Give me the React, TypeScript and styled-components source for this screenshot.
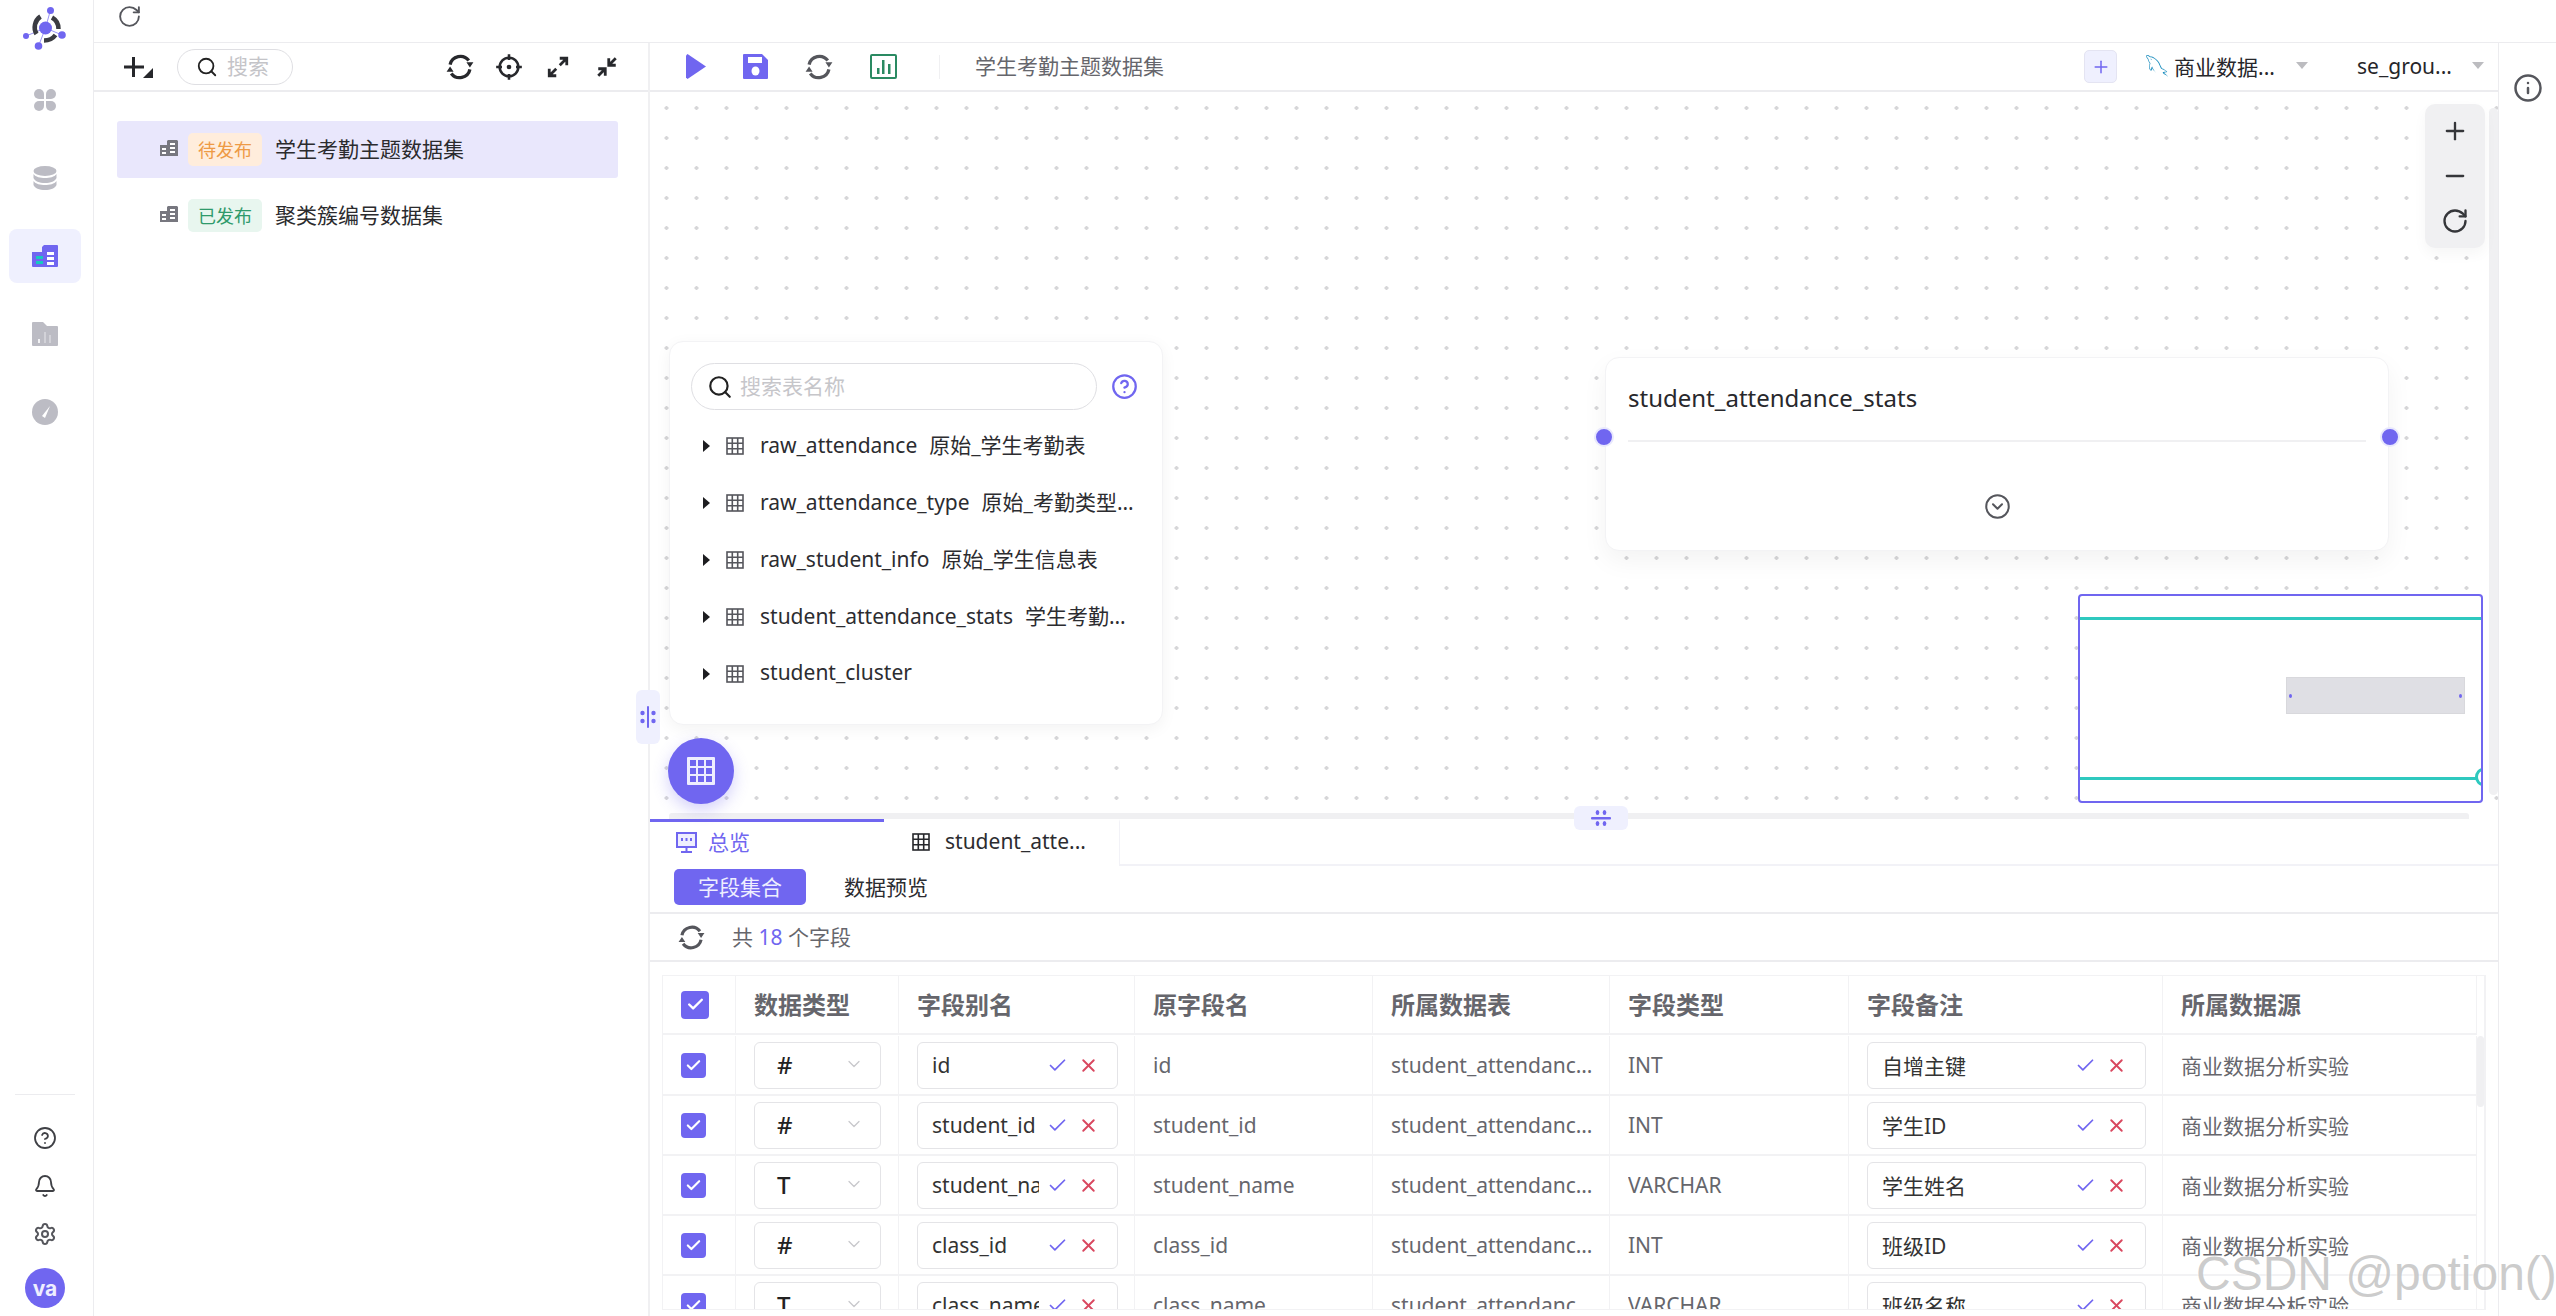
import React from 'react'
import styled, { createGlobalStyle } from 'styled-components'
import {
  Bell,
  Check,
  ChevronDown,
  CircleChevronDown,
  CircleHelp,
  Info,
  Minus,
  Plus,
  RotateCw,
  Search,
  Settings,
  X,
} from 'lucide-react'
import { GrMysql } from 'react-icons/gr'

const PURPLE = '#7066f0'
const LINE = '#ececef'

const GlobalStyle = createGlobalStyle`
  html, body, #root {
    margin: 0;
    height: 100%;
    background: #fff;
  }
  body {
    font-family: "Noto Sans", "Noto Sans CJK SC", sans-serif;
    font-size: 21px;
    color: #333;
    overflow: hidden;
  }
  * {
    box-sizing: border-box;
  }
`

const Page = styled.div`
  position: relative;
  display: flex;
  width: 2556px;
  height: 1316px;
  overflow: hidden;
`

/* left rail */
const Rail = styled.aside`
  width: 94px;
  flex: none;
  display: flex;
  flex-direction: column;
  align-items: center;
  padding: 7px 3px 8px 0;
  border-right: 1px solid ${LINE};
`

const LogoWrap = styled.div`
  height: 43px;
  margin-bottom: 23px;
`

const RailNav = styled.nav`
  display: flex;
  flex-direction: column;
  gap: 24px;
`

const RailItem = styled.div<{ $active?: boolean }>`
  width: 72px;
  height: 54px;
  display: flex;
  align-items: center;
  justify-content: center;
  border-radius: 8px;
  background: ${(p) => (p.$active ? '#eff0fe' : 'transparent')};
`

const RailFoot = styled.div`
  margin-top: auto;
  width: 60px;
  display: flex;
  flex-direction: column;
  align-items: center;
  gap: 24px;
  padding-top: 31px;
  border-top: 1px solid ${LINE};
  color: #3f4045;
`

const Avatar = styled.div`
  width: 40px;
  height: 40px;
  margin-top: -2px;
  border-radius: 50%;
  background: ${PURPLE};
  color: #eef;
  font: 700 21px 'Inter', sans-serif;
  display: flex;
  align-items: center;
  justify-content: center;
`

/* main frame */
const Main = styled.div`
  flex: 1;
  min-width: 0;
  display: flex;
  flex-direction: column;
`

const TopStrip = styled.div`
  height: 43px;
  flex: none;
  display: flex;
  align-items: flex-start;
  padding: 4px 0 0 23px;
  border-bottom: 1px solid ${LINE};
  color: #55565c;
`

const Workspace = styled.div`
  flex: 1;
  min-height: 0;
  display: flex;
`

/* dataset list */
const ListPanel = styled.section`
  width: 556px;
  flex: none;
  border-right: 2px solid #f0f0f2;
`

const ListToolbar = styled.div`
  height: 49px;
  display: flex;
  align-items: center;
  gap: 24px;
  padding: 0 27px 0 29px;
  border-bottom: 2px solid ${LINE};
`

const SearchPill = styled.div`
  width: 116px;
  height: 36px;
  display: flex;
  align-items: center;
  gap: 9px;
  padding: 0 0 3px 18px;
  border: 1px solid #dfdfe3;
  border-radius: 18px;
  color: #c4c4c8;
  svg {
    color: #222;
    flex: none;
    margin-top: 3px;
  }
`

const ToolGroup = styled.div`
  margin-left: auto;
  display: flex;
  align-items: center;
  gap: 21px;
  color: #27282c;
`

const DatasetList = styled.ul`
  list-style: none;
  margin: 0;
  padding: 29px 30px 0 23px;
  display: flex;
  flex-direction: column;
  gap: 9px;
`

const DatasetRow = styled.li<{ $active?: boolean }>`
  height: 57px;
  display: flex;
  align-items: center;
  padding: 0 0 3px 43px;
  border-radius: 3px;
  background: ${(p) => (p.$active ? '#e9e7fc' : 'transparent')};
  color: #2b2b2e;
  white-space: nowrap;
`

const StatusTag = styled.span<{ $tone: 'wait' | 'done' }>`
  width: 74px;
  height: 33px;
  margin: 3px 13px 0 10px;
  padding-bottom: 2px;
  display: flex;
  align-items: center;
  justify-content: center;
  border-radius: 5px;
  font-size: 18px;
  background: ${(p) => (p.$tone === 'wait' ? '#ffeddc' : '#e8f6ef')};
  color: ${(p) => (p.$tone === 'wait' ? '#ee9a45' : '#2f9a6b')};
`

/* editor */
const Editor = styled.section`
  flex: 1;
  min-width: 0;
  display: flex;
  flex-direction: column;
`

const EditorToolbar = styled.div`
  height: 49px;
  flex: none;
  display: flex;
  align-items: center;
  padding: 0 14px 0 36px;
  border-bottom: 2px solid ${LINE};
`

const ActionGroup = styled.div`
  display: flex;
  align-items: center;
  gap: 37px;
`

const ToolDivider = styled.div`
  width: 1px;
  height: 24px;
  margin: 0 35px 0 42px;
  background: #f0f0f2;
`

const EditorTitle = styled.span`
  color: #66666c;
  padding-bottom: 3px;
`

const AddButton = styled.div`
  width: 33px;
  height: 33px;
  margin-left: auto;
  margin-right: 29px;
  display: flex;
  align-items: center;
  justify-content: center;
  border: 1px solid #e4e4f2;
  border-radius: 5px;
  background: #eff0fe;
  color: ${PURPLE};
`

const PickBox = styled.div<{ $width: number; $gap?: number }>`
  width: ${(p) => p.$width}px;
  margin-right: ${(p) => p.$gap ?? 0}px;
  display: flex;
  align-items: center;
  gap: 6px;
  color: #26262a;
  white-space: nowrap;
  padding-bottom: 2px;
`

const Caret = styled.i`
  margin-left: auto;
  width: 0;
  height: 0;
  border-left: 6px solid transparent;
  border-right: 6px solid transparent;
  border-top: 7px solid #bcbcc0;
`

const Canvas = styled.div`
  position: relative;
  flex: 1;
  min-height: 0;
  background-color: #fff;
  background-image: radial-gradient(circle, #d6d6d8 1.7px, transparent 1.8px);
  background-size: 30px 30px;
  background-position: 1.5px 1px;
`

const ZoomDock = styled.div`
  position: absolute;
  left: 1775px;
  top: 12px;
  width: 60px;
  height: 144px;
  display: flex;
  flex-direction: column;
  align-items: center;
  justify-content: space-around;
  padding: 4px 0;
  border-radius: 10px;
  background: #f0f0f2;
  color: #35363a;
  box-shadow: 0 6px 14px rgba(0, 0, 0, 0.04);
  z-index: 2;
`

const VBar = styled.div`
  position: absolute;
  right: 0;
  top: 16px;
  width: 9px;
  height: 687px;
  border-radius: 5px;
  background: #f0f0f2;
`

const HBar = styled.div`
  position: absolute;
  left: 19px;
  right: 29px;
  bottom: 0;
  height: 6px;
  border-radius: 3px 3px 0 0;
  background: #f0f0f2;
`

const TablePanel = styled.div`
  position: absolute;
  left: 19px;
  top: 249px;
  width: 494px;
  height: 384px;
  padding: 21px 0 0 21px;
  border: 1px solid #f3f3f5;
  border-radius: 14px;
  background: #fff;
  box-shadow: 0 4px 16px rgba(0, 0, 0, 0.05);
  z-index: 2;
`

const TableSearchRow = styled.div`
  display: flex;
  align-items: center;
  gap: 14px;
  margin-bottom: 7px;
  color: ${PURPLE};
`

const TableSearch = styled.div`
  width: 406px;
  height: 47px;
  display: flex;
  align-items: center;
  gap: 7px;
  padding: 0 0 3px 15px;
  border: 1px solid #dfdfe3;
  border-radius: 24px;
  color: #c6c6ca;
  svg {
    color: #222;
    flex: none;
    margin-top: 3px;
  }
`

const TreeRow = styled.div`
  height: 57px;
  display: flex;
  align-items: center;
  padding-left: 12px;
  color: #2c2c30;
  white-space: nowrap;
`

const TreeCaret = styled.i`
  width: 0;
  height: 0;
  flex: none;
  margin-right: 16px;
  border-top: 6.5px solid transparent;
  border-bottom: 6.5px solid transparent;
  border-left: 7px solid #1d1d20;
`

const TreeText = styled.span`
  width: 375px;
  margin-left: 16px;
  padding-bottom: 3px;
  overflow: hidden;
  text-overflow: ellipsis;
  b {
    font-weight: 400;
    margin-left: 12px;
  }
`

const GripSide = styled.div`
  position: absolute;
  left: -14px;
  top: 598px;
  width: 24px;
  height: 54px;
  display: flex;
  align-items: center;
  justify-content: center;
  border-radius: 6px;
  background: #eff0fe;
  z-index: 3;
`

const GripBottom = styled.div`
  position: absolute;
  left: 924px;
  top: 714px;
  width: 54px;
  height: 24px;
  display: flex;
  align-items: center;
  justify-content: center;
  border-radius: 6px;
  background: #eff0fe;
  z-index: 3;
`

const Fab = styled.div`
  position: absolute;
  left: 18px;
  top: 646px;
  width: 66px;
  height: 66px;
  display: flex;
  align-items: center;
  justify-content: center;
  border-radius: 50%;
  background: ${PURPLE};
  box-shadow: 0 6px 16px rgba(112, 102, 240, 0.3);
  z-index: 3;
`

const NodeCard = styled.div`
  position: absolute;
  left: 955px;
  top: 265px;
  width: 784px;
  height: 194px;
  display: flex;
  flex-direction: column;
  padding: 0 22px 0 22px;
  border: 1px solid #f3f3f5;
  border-radius: 14px;
  background: #fff;
  box-shadow: 0 10px 26px rgba(0, 0, 0, 0.05);
`

const NodeTitle = styled.div`
  height: 84px;
  display: flex;
  align-items: center;
  padding-bottom: 4px;
  font-size: 24px;
  color: #28282c;
  border-bottom: 2px solid #f0f0f2;
`

const NodeFoot = styled.div`
  flex: 1;
  display: flex;
  align-items: center;
  justify-content: center;
  padding-top: 20px;
  color: #55565c;
`

const Port = styled.i<{ $side: 'left' | 'right' }>`
  position: absolute;
  top: 69px;
  ${(p) => p.$side}: -12px;
  width: 20px;
  height: 20px;
  border-radius: 50%;
  background: ${PURPLE};
  border: 2px solid #e8e8fd;
`

const MiniMap = styled.div`
  position: absolute;
  left: 1428px;
  top: 502px;
  width: 405px;
  height: 209px;
  overflow: hidden;
  border: 2px solid ${PURPLE};
  border-radius: 4px;
  background: #fff;
`

const MiniLine = styled.i<{ $top: number }>`
  position: absolute;
  left: 0;
  right: 0;
  top: ${(p) => p.$top}px;
  height: 3px;
  background: #2ec9bf;
`

const MiniRing = styled.i`
  position: absolute;
  right: -10px;
  top: 172px;
  width: 16px;
  height: 18px;
  border: 3px solid #2ec9bf;
  border-radius: 50%;
  background: #fff;
`

const MiniNode = styled.i`
  position: absolute;
  left: 206px;
  top: 81px;
  width: 179px;
  height: 37px;
  background: #dfdfe4;
  border: 1px solid #d8d8dc;
  &::before,
  &::after {
    content: '';
    position: absolute;
    top: 16px;
    width: 3px;
    height: 4px;
    border-radius: 50%;
    background: ${PURPLE};
  }
  &::before {
    left: 2px;
  }
  &::after {
    right: 2px;
  }
`

/* detail area */
const Detail = styled.div`
  height: 497px;
  flex: none;
  display: flex;
  flex-direction: column;
`

const TabRow = styled.div`
  height: 47px;
  flex: none;
  display: flex;
  border-bottom: 2px solid #f2f2f7;
`

const TabItem = styled.div<{ $active?: boolean }>`
  height: 47px;
  width: ${(p) => (p.$active ? 234 : 236)}px;
  display: flex;
  align-items: center;
  gap: ${(p) => (p.$active ? 11 : 15)}px;
  padding: 0 0 6px ${(p) => (p.$active ? 26 : 28)}px;
  border-top: 3px solid ${(p) => (p.$active ? PURPLE : 'transparent')};
  border-right: ${(p) => (p.$active ? 'none' : '1px solid #f2f2f7')};
  background: #fff;
  color: ${(p) => (p.$active ? PURPLE : '#2c2c30')};
  svg {
    margin-top: 2px;
    flex: none;
  }
`

const SubTabs = styled.div`
  height: 48px;
  flex: none;
  display: flex;
  align-items: center;
  gap: 38px;
  padding: 0 0 5px 24px;
  border-bottom: 2px solid #ececef;
`

const SubTab = styled.div<{ $active?: boolean }>`
  width: ${(p) => (p.$active ? '132px' : 'auto')};
  height: 36px;
  display: flex;
  align-items: center;
  justify-content: center;
  padding-bottom: 2px;
  border-radius: 5px;
  background: ${(p) => (p.$active ? PURPLE : 'transparent')};
  color: ${(p) => (p.$active ? '#eef' : '#2c2c30')};
`

const CountRow = styled.div`
  height: 48px;
  flex: none;
  display: flex;
  align-items: center;
  gap: 27px;
  padding-left: 28px;
  border-bottom: 2px solid #ececef;
  color: #66666c;
  span {
    padding-bottom: 2px;
  }
  em {
    font-style: normal;
    color: ${PURPLE};
  }
`

const TableShell = styled.div`
  margin: 13px 12px 0;
  height: 335px;
  display: flex;
  overflow: hidden;
  border: 1px solid #f2f2f4;
  border-right: 2px solid #f2f2f4;
`

const FieldGrid = styled.div`
  width: 1814px;
  flex: none;
  display: grid;
  grid-template-columns: 73px 163px 236px 238px 237px 239px 314px 314px;
  grid-auto-rows: 60px;
  align-content: start;
`

const HeadCell = styled.div`
  height: 59px;
  display: flex;
  align-items: center;
  padding-left: 18px;
  padding-bottom: 2px;
  border-right: 1px solid #f2f2f4;
  border-bottom: 2px solid #f2f2f4;
  font-size: 24px;
  font-weight: 700;
  color: #66666c;
`

const BodyCell = styled.div<{ $tight?: boolean }>`
  min-width: 0;
  display: flex;
  align-items: center;
  padding: 0 ${(p) => (p.$tight ? 6 : 16)}px 0 18px;
  border-right: 1px solid #f2f2f4;
  border-bottom: 2px solid #f2f2f4;
  color: #66666c;
  span {
    padding-bottom: 1px;
    overflow: hidden;
    white-space: nowrap;
    text-overflow: ellipsis;
  }
`

const CheckBox = styled.div<{ $size: number }>`
  width: ${(p) => p.$size}px;
  height: ${(p) => p.$size}px;
  margin-top: ${(p) => (p.$size > 25 ? 2 : 0)}px;
  display: flex;
  align-items: center;
  justify-content: center;
  border-radius: 4px;
  background: ${PURPLE};
  color: #fff;
`

const TypeSelect = styled.div`
  width: 127px;
  height: 47px;
  flex: none;
  display: flex;
  align-items: center;
  padding: 0 16px 2px 22px;
  border: 1px solid #e4e4e7;
  border-radius: 6px;
  color: #222;
  font-size: 24px;
  font-weight: 500;
  svg {
    margin-left: auto;
    color: #c8c8cc;
  }
`

const EditBox = styled.div`
  width: 100%;
  height: 47px;
  display: flex;
  align-items: center;
  padding: 0 18px 0 14px;
  border: 1px solid #e4e4e7;
  border-radius: 6px;
  color: #333;
  span {
    flex: 1;
    min-width: 0;
    text-overflow: clip;
  }
`

const EditActions = styled.div`
  display: flex;
  align-items: center;
  gap: 10px;
  margin-left: 8px;
  flex: none;
`

const ScrollTrack = styled.div`
  flex: 1;
  padding-top: 60px;
`

const ScrollThumb = styled.div`
  height: 71px;
  border-radius: 4px;
  background: #f0f0f2;
`

const InfoColumn = styled.div`
  width: 58px;
  flex: none;
  display: flex;
  justify-content: center;
  padding-top: 30px;
  border-left: 1px solid ${LINE};
  color: #55565c;
`

const Watermark = styled.div`
  position: absolute;
  left: 2196px;
  top: 1246px;
  font: 48px 'Liberation Sans', sans-serif;
  white-space: nowrap;
  color: rgba(170, 170, 170, 0.6);
  text-shadow: 0 0 3px #fff;
  pointer-events: none;
`

/* drawings */
const Logo = () => (
  <svg width="44" height="43" viewBox="0 0 44 43">
    <path d="M22.500 21 27.500 3M22.500 21 39 28M22.500 21 15.500 39M22.500 21 3 29" stroke="#9a94f6" strokeWidth="1" fill="none" />
    <g stroke="#3b3c42" strokeWidth="4.500" fill="none">
      <path d="M17.500 9.500A13 13 0 0 0 13.500 27" />
      <path d="M29 10.500A13 13 0 0 1 35.500 22" />
      <path d="M21 33.500C26 33.500 30 31.500 32.500 28" />
    </g>
    <g fill={PURPLE}>
      <circle cx="22.500" cy="21" r="6.500" />
      <circle cx="27.500" cy="3.500" r="3.500" />
      <circle cx="39" cy="28" r="3.800" />
      <circle cx="15.500" cy="39" r="3.800" />
      <circle cx="3" cy="29" r="3" />
    </g>
  </svg>
)

const Clover = () => (
  <svg width="24" height="24" viewBox="0 0 24 24" fill="#bcbcc4">
    <path d="M11 11H6a5 5 0 1 1 5-5z" />
    <path d="M13 11h5a5 5 0 1 0-5-5z" />
    <path d="M11 13H6a5 5 0 1 0 5 5z" />
    <path d="M13 13h5a5 5 0 1 1-5 5z" />
  </svg>
)

const Database = () => (
  <svg width="24" height="24" viewBox="0 0 24 24" fill="#bcbcc4">
    <ellipse cx="12" cy="5" rx="11.500" ry="5" />
    <path d="M.5 8c2 3 7 4 11.500 4s9.500-1 11.500-4v4c-1 3-6 5-11.500 5S1.500 15 .5 12z" />
    <path d="M.5 15c2 3 7 4 11.500 4s9.500-1 11.500-4v4c-1 3-6 5-11.500 5S1.500 22 .5 19z" />
  </svg>
)

const BuildingActive = () => (
  <svg width="26" height="22" viewBox="0 0 26 22">
    <path d="M0 7h10V2l2-2h13a1 1 0 0 1 1 1v20a1 1 0 0 1-1 1H1a1 1 0 0 1-1-1z" fill={PURPLE} />
    <g fill="#17c9c0">
      <rect x="4" y="11" width="7" height="3" />
      <rect x="4" y="16" width="7" height="3" />
    </g>
    <g fill="#fff">
      <rect x="15" y="7" width="7" height="3" />
      <rect x="15" y="12" width="7" height="3" />
      <rect x="15" y="17" width="7" height="3" />
    </g>
  </svg>
)

const FolderChart = () => (
  <svg width="26" height="24" viewBox="0 0 26 24">
    <path d="M0 1a1 1 0 0 1 1-1h10l4 4h10a1 1 0 0 1 1 1v18a1 1 0 0 1-1 1H1a1 1 0 0 1-1-1z" fill="#bcbcc4" />
    <g fill="#d2d2d8">
      <rect x="6" y="17" width="2" height="4" fill="#f2f2f4" />
      <rect x="12" y="10" width="2" height="11" />
      <rect x="17" y="13" width="2" height="8" />
    </g>
  </svg>
)

const Gauge = () => (
  <svg width="26" height="26" viewBox="0 0 26 26">
    <circle cx="13" cy="13" r="13" fill="#bcbcc4" />
    <path d="M10 17 18 7l-5 12z" fill="#fff" />
  </svg>
)

const PlusCorner = () => (
  <svg width="30" height="22" viewBox="0 0 30 22">
    <path d="M10.500 1v20M1 11h20" stroke="#26272b" strokeWidth="3" />
    <path d="M30 12v10H20z" fill="#26272b" />
  </svg>
)

const Sync = ({ size = 28, color = '#55565c' }: { size?: number; color?: string }) => (
  <svg width={size} height={size} viewBox="0 0 24 24" fill="none">
    <path d="M3.500 10A9 9 0 0 1 19.500 6.500M20.500 14A9 9 0 0 1 4.500 17.500" stroke={color} strokeWidth="2.800" />
    <path d="M17.500 8h6l-3 4.500zM.5 16h6l-3-4.500z" fill={color} />
  </svg>
)

const Target = () => (
  <svg width="28" height="28" viewBox="0 0 24 24" fill="none" stroke="currentColor" strokeWidth="2.200">
    <circle cx="12" cy="12" r="8" />
    <path d="M12 1v5M12 18v5M1 12h5M18 12h5" />
    <circle cx="12" cy="12" r="2" fill="currentColor" stroke="none" />
  </svg>
)

const Expand = () => (
  <svg width="28" height="28" viewBox="-4 -4 32 32" fill="none" stroke="currentColor" strokeWidth="3.200">
    <path d="M14 10l8-8M14 2h8v8M10 14l-8 8M2 14v8h8" />
  </svg>
)

const Collapse = () => (
  <svg width="28" height="28" viewBox="-4 -4 32 32" fill="none" stroke="currentColor" strokeWidth="3.200">
    <path d="M22 2l-8 8M14 2v8h8M2 22l8-8M2 14h8v8" />
  </svg>
)

const SmallBuilding = () => (
  <svg width="18" height="16" viewBox="0 0 18 16">
    <path d="M0 5h7V1l1-1h9l1 1v15H0z" fill="#77777f" />
    <g fill="#fff">
      <rect x="2" y="8" width="4" height="2" />
      <rect x="2" y="12" width="4" height="2" />
      <rect x="10" y="3" width="5" height="2" />
      <rect x="10" y="7" width="5" height="2" />
      <rect x="10" y="11" width="5" height="2" />
    </g>
  </svg>
)

const Play = () => (
  <svg width="20" height="25" viewBox="0 0 20 25">
    <path d="M0 1.500 1.500 0 20 12.500 1.500 25 0 23.500z" fill={PURPLE} />
  </svg>
)

const Save = () => (
  <svg width="25" height="25" viewBox="0 0 25 25">
    <path d="M1 0h18l6 6v18a1 1 0 0 1-1 1H1a1 1 0 0 1-1-1V1a1 1 0 0 1 1-1z" fill={PURPLE} />
    <rect x="5" y="3" width="14" height="6" fill="#fff" />
    <ellipse cx="12.500" cy="17" rx="4" ry="4.500" fill="#fff" />
  </svg>
)

const ChartBox = () => (
  <svg width="27" height="25" viewBox="0 0 27 25">
    <rect x="1" y="1" width="25" height="23" rx="1" fill="#fff" stroke="#2a8a62" strokeWidth="2" />
    <path d="M7 14h2.500v6H7zM12 6h2.500v14H12zM18 10h2.500v10H18z" fill="#2a8a62" />
  </svg>
)

const GridIcon = ({ size = 18, color = '#55565c' }: { size?: number; color?: string }) => (
  <svg width={size} height={size} viewBox="0 0 18 18" fill="none" stroke={color} strokeWidth="1.600">
    <rect x="1" y="1" width="16" height="16" />
    <path d="M6.300 1v16M11.700 1v16M1 6.300h16M1 11.700h16" />
  </svg>
)

const FabGrid = () => (
  <svg width="28" height="28" viewBox="0 0 28 28">
    <rect width="28" height="28" rx="1" fill="#eeeefe" />
    <g fill={PURPLE}>
      {[3, 11, 19].map((y) =>
        [3, 11, 19].map((x) => <rect key={`${x}-${y}`} x={x} y={y} width="6" height="6" />)
      )}
    </g>
  </svg>
)

const GripV = () => (
  <svg width="16" height="22" viewBox="0 0 16 22" fill={PURPLE}>
    <rect x="7" y="0" width="2" height="22" rx="1" />
    <circle cx="2.500" cy="7" r="2.200" />
    <circle cx="13.500" cy="7" r="2.200" />
    <circle cx="2.500" cy="15" r="2.200" />
    <circle cx="13.500" cy="15" r="2.200" />
  </svg>
)

const GripH = () => (
  <svg width="20" height="16" viewBox="0 0 20 16" fill={PURPLE}>
    <rect x="0" y="7" width="20" height="2.400" rx="1" />
    <ellipse cx="6.500" cy="2.500" rx="1.800" ry="2.500" />
    <ellipse cx="13.500" cy="2.500" rx="1.800" ry="2.500" />
    <ellipse cx="6.500" cy="13.500" rx="1.800" ry="2.500" />
    <ellipse cx="13.500" cy="13.500" rx="1.800" ry="2.500" />
  </svg>
)

const Monitor = () => (
  <svg width="21" height="21" viewBox="0 0 21 21" fill="none" stroke={PURPLE} strokeWidth="2">
    <rect x="1" y="1" width="19" height="14" fill="#eeeefe" />
    <path d="M10.500 15v4M5 20h11M6 6v3M10.500 6v3M15 6v3" />
  </svg>
)

const fields = [
  { type: '#', alias: 'id', source: 'id', kind: 'INT', note: '自增主键' },
  { type: '#', alias: 'student_id', source: 'student_id', kind: 'INT', note: '学生ID' },
  { type: 'T', alias: 'student_name', source: 'student_name', kind: 'VARCHAR', note: '学生姓名' },
  { type: '#', alias: 'class_id', source: 'class_id', kind: 'INT', note: '班级ID' },
  { type: 'T', alias: 'class_name', source: 'class_name', kind: 'VARCHAR', note: '班级名称' },
]

const tables = [
  ['raw_attendance', '原始_学生考勤表'],
  ['raw_attendance_type', '原始_考勤类型维度表'],
  ['raw_student_info', '原始_学生信息表'],
  ['student_attendance_stats', '学生考勤主题统计表'],
  ['student_cluster', ''],
]

const headers = ['数据类型', '字段别名', '原字段名', '所属数据表', '字段类型', '字段备注', '所属数据源']

const EditCell = ({ value }: { value: string }) => (
  <BodyCell>
    <EditBox>
      <span>{value}</span>
      <EditActions>
        <Check size={21} color={PURPLE} strokeWidth={2} />
        <X size={21} color="#d9475f" strokeWidth={2.200} />
      </EditActions>
    </EditBox>
  </BodyCell>
)

export default function App() {
  return (
    <Page>
      <GlobalStyle />
      <Rail>
        <LogoWrap>
          <Logo />
        </LogoWrap>
        <RailNav>
          <RailItem>
            <Clover />
          </RailItem>
          <RailItem>
            <Database />
          </RailItem>
          <RailItem $active>
            <BuildingActive />
          </RailItem>
          <RailItem>
            <FolderChart />
          </RailItem>
          <RailItem>
            <Gauge />
          </RailItem>
        </RailNav>
        <RailFoot>
          <CircleHelp size={24} strokeWidth={1.800} />
          <Bell size={24} strokeWidth={1.800} />
          <Settings size={24} strokeWidth={2} color="#55565c" />
          <Avatar>va</Avatar>
        </RailFoot>
      </Rail>

      <Main>
        <TopStrip>
          <RotateCw size={25} strokeWidth={1.800} />
        </TopStrip>
        <Workspace>
          <ListPanel>
            <ListToolbar>
              <PlusCorner />
              <SearchPill>
                <Search size={22} strokeWidth={2} />
                搜索
              </SearchPill>
              <ToolGroup>
                <Sync color="#27282c" />
                <Target />
                <Expand />
                <Collapse />
              </ToolGroup>
            </ListToolbar>
            <DatasetList>
              <DatasetRow $active>
                <SmallBuilding />
                <StatusTag $tone="wait">待发布</StatusTag>
                学生考勤主题数据集
              </DatasetRow>
              <DatasetRow>
                <SmallBuilding />
                <StatusTag $tone="done">已发布</StatusTag>
                聚类簇编号数据集
              </DatasetRow>
            </DatasetList>
          </ListPanel>

          <Editor>
            <EditorToolbar>
              <ActionGroup>
                <Play />
                <Save />
                <Sync />
                <ChartBox />
              </ActionGroup>
              <ToolDivider />
              <EditorTitle>学生考勤主题数据集</EditorTitle>
              <AddButton>
                <Plus size={20} strokeWidth={1.800} />
              </AddButton>
              <PickBox $width={162} $gap={49}>
                <GrMysql size={22} color="#1f8fbf" />
                商业数据...
                <Caret />
              </PickBox>
              <PickBox $width={127}>
                se_grou...
                <Caret />
              </PickBox>
            </EditorToolbar>

            <Canvas>
              <ZoomDock>
                <Plus size={28} strokeWidth={2} />
                <Minus size={28} strokeWidth={2} />
                <RotateCw size={28} strokeWidth={2} />
              </ZoomDock>
              <VBar />
              <HBar />

              <TablePanel>
                <TableSearchRow>
                  <TableSearch>
                    <Search size={26} strokeWidth={2} />
                    搜索表名称
                  </TableSearch>
                  <CircleHelp size={27} strokeWidth={2} />
                </TableSearchRow>
                {tables.map(([name, label]) => (
                  <TreeRow key={name}>
                    <TreeCaret />
                    <GridIcon />
                    <TreeText>
                      {name}
                      {label && <b>{label}</b>}
                    </TreeText>
                  </TreeRow>
                ))}
              </TablePanel>
              <GripSide>
                <GripV />
              </GripSide>
              <Fab>
                <FabGrid />
              </Fab>

              <NodeCard>
                <NodeTitle>student_attendance_stats</NodeTitle>
                <NodeFoot>
                  <CircleChevronDown size={27} strokeWidth={1.800} />
                </NodeFoot>
                <Port $side="left" />
                <Port $side="right" />
              </NodeCard>

              <MiniMap>
                <MiniLine $top={21} />
                <MiniLine $top={181} />
                <MiniRing />
                <MiniNode />
              </MiniMap>
              <GripBottom>
                <GripH />
              </GripBottom>
            </Canvas>

            <Detail>
              <TabRow>
                <TabItem $active>
                  <Monitor />
                  总览
                </TabItem>
                <TabItem>
                  <GridIcon color="#26272b" />
                  student_atte...
                </TabItem>
              </TabRow>
              <SubTabs>
                <SubTab $active>字段集合</SubTab>
                <SubTab>数据预览</SubTab>
              </SubTabs>
              <CountRow>
                <Sync size={27} />
                <span>
                  共 <em>18</em> 个字段
                </span>
              </CountRow>
              <TableShell>
                <FieldGrid>
                  <HeadCell>
                    <CheckBox $size={28}>
                      <Check size={19} strokeWidth={3} />
                    </CheckBox>
                  </HeadCell>
                  {headers.map((h) => (
                    <HeadCell key={h}>{h}</HeadCell>
                  ))}
                  {fields.map((f) => (
                    <React.Fragment key={f.alias}>
                      <BodyCell>
                        <CheckBox $size={25}>
                          <Check size={17} strokeWidth={3} />
                        </CheckBox>
                      </BodyCell>
                      <BodyCell>
                        <TypeSelect>
                          {f.type}
                          <ChevronDown size={20} strokeWidth={1.500} />
                        </TypeSelect>
                      </BodyCell>
                      <EditCell value={f.alias} />
                      <BodyCell>
                        <span>{f.source}</span>
                      </BodyCell>
                      <BodyCell $tight>
                        <span>student_attendance_stats</span>
                      </BodyCell>
                      <BodyCell>
                        <span>{f.kind}</span>
                      </BodyCell>
                      <EditCell value={f.note} />
                      <BodyCell>
                        <span>商业数据分析实验</span>
                      </BodyCell>
                    </React.Fragment>
                  ))}
                </FieldGrid>
                <ScrollTrack>
                  <ScrollThumb />
                </ScrollTrack>
              </TableShell>
            </Detail>
          </Editor>

          <InfoColumn>
            <Info size={30} strokeWidth={2} />
          </InfoColumn>
        </Workspace>
      </Main>
      <Watermark>CSDN @potion()</Watermark>
    </Page>
  )
}
